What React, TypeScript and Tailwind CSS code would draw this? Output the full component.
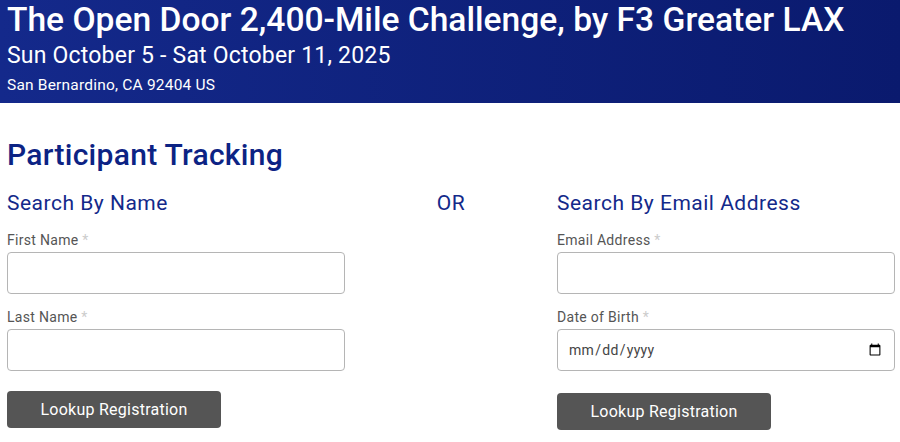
import React from 'react';

const font = "font-['Roboto','Liberation_Sans',sans-serif]";

const Field: React.FC<{ label: string; type?: string; last?: boolean }> = ({ label, type = 'text', last }) => (
  <div className={last ? '' : 'mb-[13px]'}>
    <label className="block text-[14px] leading-[20px] tracking-[0.3px] text-[#555] mb-[2px]">
      {label} <span className="text-[#ccc]">*</span>
    </label>
    <input
      type={type}
      className="block w-full h-[42px] border border-[#b5b5b5] rounded-[4px] bg-white px-[10px] text-[14px] tracking-[0.3px] text-[#444] outline-none"
    />
  </div>
);

const LookupButton: React.FC<{ mt: string }> = ({ mt }) => (
  <button className={`${mt} w-[214px] h-[37px] rounded-[4px] bg-[#555] text-white text-[16px] tracking-[0.25px]`}>
    Lookup Registration
  </button>
);

export default function App() {
  return (
    <div className={`${font} bg-white min-h-[442px]`}>
      {/* Event header */}
      <div className="h-[103px] bg-gradient-to-r from-[#14298b] to-[#0a1a6e] px-[7px] text-white">
        <h1 className="text-[33.6px] leading-[40px] font-medium">
          The Open Door 2,400-Mile Challenge, by F3 Greater LAX
        </h1>
        <div className="mt-[2px] text-[23px] leading-[28px] tracking-[0.2px]">Sun October 5 - Sat October 11, 2025</div>
        <div className="mt-[5px] text-[15.5px] leading-[20px] tracking-[0.2px]">San Bernardino, CA 92404 US</div>
      </div>

      <div className="px-[7px] pt-[34px]">
        <h2 className="text-[30px] leading-[36px] font-medium tracking-[0.3px] text-[#0c2384]">Participant Tracking</h2>

        <div className="grid grid-cols-[338px_212px_338px] mt-[16px]">
          {/* Search by name */}
          <div>
            <h3 className="text-[21px] leading-[28px] tracking-[0.5px] text-[#13298a] mb-[13px]">Search By Name</h3>
            <Field label="First Name" />
            <Field label="Last Name" last />
            <LookupButton mt="mt-[20px]" />
          </div>

          <div className="text-center text-[21px] leading-[28px] tracking-[0.5px] text-[#13298a]">OR</div>

          {/* Search by email */}
          <div>
            <h3 className="text-[21px] leading-[28px] tracking-[0.5px] text-[#13298a] mb-[13px]">Search By Email Address</h3>
            <Field label="Email Address" type="email" />
            <Field label="Date of Birth" type="date" last />
            <LookupButton mt="mt-[22px]" />
          </div>
        </div>
      </div>
    </div>
  );
}
